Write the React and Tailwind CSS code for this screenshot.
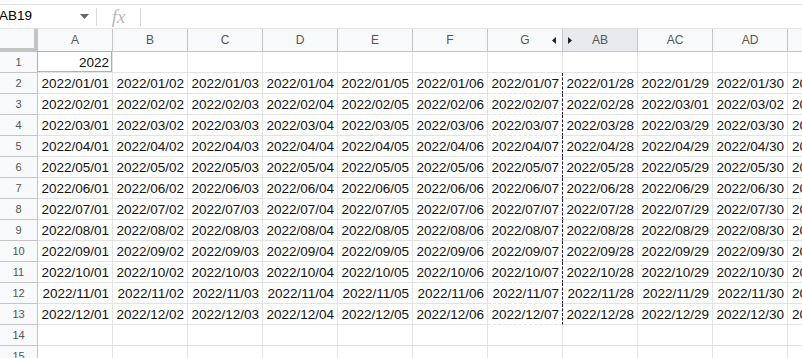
import React from 'react';

const cols = [
  { label: 'A', day: 1 },
  { label: 'B', day: 2 },
  { label: 'C', day: 3 },
  { label: 'D', day: 4 },
  { label: 'E', day: 5 },
  { label: 'F', day: 6 },
  { label: 'G', day: 7 },
  { label: 'AB', day: 28 },
  { label: 'AC', day: 29 },
  { label: 'AD', day: 30 },
  { label: 'AE', day: 31 },
];

const pad = (n) => String(n).padStart(2, '0');

const fmt = (month, day) => {
  const d = new Date(2022, month, day);
  return `${d.getFullYear()}/${pad(d.getMonth() + 1)}/${pad(d.getDate())}`;
};

const FormulaBar = () => (
  <div className="h-[29px] pt-[4px]">
    <div className="h-[25px] flex items-center border-t border-b border-[#e1e1e1]">
      <div className="w-[96px] h-full flex items-center justify-between overflow-hidden">
        <span className="ml-[-1px] text-[13.5px] text-black">AB19</span>
        <svg width="9" height="5" viewBox="0 0 9 5" className="mr-[7px]">
          <polygon points="0,0 9,0 4.5,5" fill="#666" />
        </svg>
      </div>
      <div className="w-px h-[18px] bg-[#dadada]" />
      <div className="w-[43px] flex justify-center">
        <span className="font-['Liberation_Serif',serif] italic text-[19px] leading-none text-[#b8b8b8]">fx</span>
      </div>
      <div className="w-px h-[18px] bg-[#dadada]" />
    </div>
  </div>
);

const HeaderRow = () => (
  <div className="flex h-[23px]">
    <div className="w-[38px] shrink-0 bg-[#f8f9fa] border-r-4 border-b-4 border-[#c4c4c4]" />
    {cols.map((c) => (
      <div
        key={c.label}
        className={`relative w-[75px] shrink-0 flex items-center justify-center border-r border-b border-[#c4c4c4] text-[12px] text-[#555] ${
          c.label === 'AB' ? 'bg-[#e8eaed]' : 'bg-[#f8f9fa]'
        }`}
      >
        {c.label}
        {c.label === 'G' && (
          <svg width="4" height="7" viewBox="0 0 4 7" className="absolute right-[6px] top-[8px]">
            <polygon points="4,0 4,7 0,3.5" fill="#222" />
          </svg>
        )}
        {c.label === 'AB' && (
          <svg width="4" height="7" viewBox="0 0 4 7" className="absolute left-[5px] top-[8px]">
            <polygon points="0,0 0,7 4,3.5" fill="#222" />
          </svg>
        )}
      </div>
    ))}
  </div>
);

const Row = ({ n }) => (
  <div className="flex h-[21px]">
    <div className="w-[38px] shrink-0 flex items-center justify-center bg-[#f8f9fa] border-r border-b border-[#c4c4c4] text-[11px] text-[#555]">
      {n}
    </div>
    {cols.map((c) => {
      let text = '';
      if (n === 1 && c.label === 'A') text = '2022';
      if (n >= 2 && n <= 13) text = fmt(n - 2, c.day);
      const marquee = c.label === 'G' && n >= 2 && n <= 13;
      const selected = n === 1 && c.label === 'A';
      return (
        <div
          key={c.label}
          className={`relative w-[75px] shrink-0 flex items-end justify-end pr-[3px] pb-[1px] border-b border-[#e2e3e3] text-[13.5px] leading-[17px] text-[#111] whitespace-nowrap ${
            marquee ? 'border-r border-r-[#24123f] border-dashed' : 'border-r border-r-[#e2e3e3]'
          } ${c.label === 'AE' ? 'justify-start pl-[4px] overflow-hidden' : ''}`}
        >
          {text}
          {selected && <div className="absolute inset-[-1px_0_0_-1px] border border-[#b4a7d6]" />}
        </div>
      );
    })}
  </div>
);

export default function App() {
  const rows = Array.from({ length: 15 }, (_, i) => i + 1);
  return (
    <div className="w-[802px] h-[358px] overflow-hidden bg-white font-['Liberation_Sans',Arial,sans-serif]">
      <FormulaBar />
      <div className="w-[900px]">
        <HeaderRow />
        {rows.map((n) => (
          <Row key={n} n={n} />
        ))}
      </div>
    </div>
  );
}
